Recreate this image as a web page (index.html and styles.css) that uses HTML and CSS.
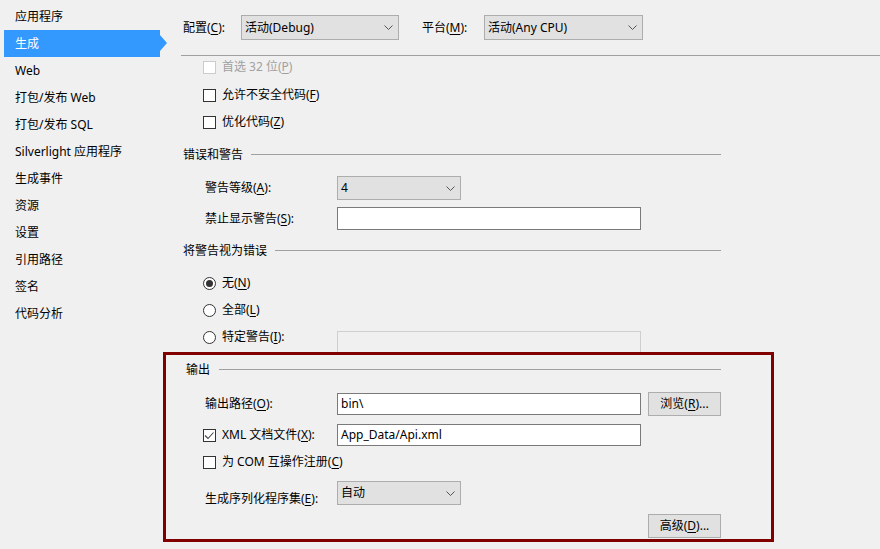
FILE: index.html
```html
<!DOCTYPE html>
<html lang="zh-CN">
<head>
<meta charset="utf-8">
<title>生成</title>
<link rel="stylesheet" href="styles.css">
</head>
<body>
<div class="app">
  <nav class="sidebar">
    <div class="nav-item">应用程序</div>
    <div class="nav-item active">生成</div>
    <div class="nav-item">Web</div>
    <div class="nav-item">打包/发布 Web</div>
    <div class="nav-item">打包/发布 SQL</div>
    <div class="nav-item">Silverlight 应用程序</div>
    <div class="nav-item">生成事件</div>
    <div class="nav-item">资源</div>
    <div class="nav-item">设置</div>
    <div class="nav-item">引用路径</div>
    <div class="nav-item">签名</div>
    <div class="nav-item">代码分析</div>
  </nav>

  <main class="main">
    <div class="topbar">
      <span class="top-label label-config">配置(<u>C</u>):</span>
      <div class="dropdown dropdown-config">
        <span class="dd-text">活动(Debug)</span>
        <svg class="chev" width="9" height="5" viewBox="0 0 9 5"><polyline points="0.5,0.5 4.5,4.5 8.5,0.5" fill="none" stroke="#555" stroke-width="1"/></svg>
      </div>
      <span class="top-label label-platform">平台(<u>M</u>):</span>
      <div class="dropdown dropdown-platform">
        <span class="dd-text">活动(Any CPU)</span>
        <svg class="chev" width="9" height="5" viewBox="0 0 9 5"><polyline points="0.5,0.5 4.5,4.5 8.5,0.5" fill="none" stroke="#555" stroke-width="1"/></svg>
      </div>
    </div>
    <div class="top-sep"></div>

    <div class="content">
      <div class="check-row row-prefer disabled">
        <span class="checkbox checkbox-disabled"></span>
        <span>首选 32 位(<u>P</u>)</span>
      </div>
      <div class="check-row row-unsafe">
        <span class="checkbox"></span>
        <span>允许不安全代码(<u>F</u>)</span>
      </div>
      <div class="check-row row-optimize">
        <span class="checkbox"></span>
        <span>优化代码(<u>Z</u>)</span>
      </div>

      <div class="section-head head-errors">错误和警告</div>

      <div class="field-row row-level">
        <span class="field-label">警告等级(<u>A</u>):</span>
        <div class="dropdown dropdown-small">
          <span class="dd-text">4</span>
          <svg class="chev" width="9" height="5" viewBox="0 0 9 5"><polyline points="0.5,0.5 4.5,4.5 8.5,0.5" fill="none" stroke="#555" stroke-width="1"/></svg>
        </div>
      </div>
      <div class="field-row row-suppress">
        <span class="field-label">禁止显示警告(<u>S</u>):</span>
        <div class="textbox textbox-wide"></div>
      </div>

      <div class="section-head head-treat">将警告视为错误</div>

      <div class="check-row row-none">
        <span class="radio radio-on"></span>
        <span>无(<u>N</u>)</span>
      </div>
      <div class="check-row row-all">
        <span class="radio"></span>
        <span>全部(<u>L</u>)</span>
      </div>
      <div class="check-row row-specific">
        <div class="radio-group">
          <span class="radio"></span>
          <span class="radio-text">特定警告(<u>I</u>):</span>
        </div>
        <div class="textbox textbox-disabled"></div>
      </div>
    </div>

    <section class="output">
      <div class="section-head head-output">输出</div>

      <div class="field-row out-path">
        <span class="field-label">输出路径(<u>O</u>):</span>
        <div class="textbox textbox-wide textbox-filled">bin\</div>
        <div class="button">浏览(<u>R</u>)...</div>
      </div>

      <div class="check-row out-xml">
        <span class="checkbox">
          <svg width="13" height="13" viewBox="0 0 13 13"><polyline points="2,6.5 5,9.5 10.5,3.5" fill="none" stroke="#444" stroke-width="1.1"/></svg>
        </span>
        <span class="xml-label">XML 文档文件(<u>X</u>):</span>
        <div class="textbox textbox-wide textbox-filled">App_Data/Api.xml</div>
      </div>

      <div class="check-row out-com">
        <span class="checkbox"></span>
        <span>为 COM 互操作注册(<u>C</u>)</span>
      </div>

      <div class="field-row out-serial">
        <span class="field-label serial-label">生成序列化程序集(<u>E</u>):</span>
        <div class="dropdown dropdown-small">
          <span class="dd-text">自动</span>
          <svg class="chev" width="9" height="5" viewBox="0 0 9 5"><polyline points="0.5,0.5 4.5,4.5 8.5,0.5" fill="none" stroke="#555" stroke-width="1"/></svg>
        </div>
      </div>

      <div class="advanced-row">
        <div class="button">高级(<u>D</u>)...</div>
      </div>
    </section>
  </main>
</div>
</body>
</html>
```

FILE: styles.css
```css
* { box-sizing: border-box; }

html, body {
  margin: 0;
  padding: 0;
}

body {
  background: #f0f0f0;
  color: #000;
  font-family: "Noto Sans", "Noto Sans CJK SC", sans-serif;
  font-size: 12px;
  line-height: 16px;
  width: 880px;
  height: 549px;
  overflow: hidden;
}

u { text-decoration: underline; text-underline-offset: 2px; }

.app {
  display: flex;
  height: 549px;
}

/* ---------- sidebar ---------- */
.sidebar {
  width: 160px;
  flex: none;
  padding-top: 3px;
}

.nav-item {
  height: 27px;
  line-height: 27px;
  padding-left: 15px;
  white-space: nowrap;
}

.nav-item.active {
  position: relative;
  margin-left: 4px;
  padding-left: 11px;
  background: #3399ff;
  color: #fff;
}

.nav-item.active::after {
  content: "";
  position: absolute;
  left: 100%;
  top: 5px;
  border-left: 7px solid #3399ff;
  border-top: 8px solid transparent;
  border-bottom: 8px solid transparent;
}

/* ---------- main ---------- */
.main {
  flex: 1;
  min-width: 0;
}

.topbar {
  height: 55px;
  display: flex;
  align-items: flex-start;
  padding-top: 15px;
  padding-left: 23px;
}

.top-label {
  height: 25px;
  line-height: 25px;
  white-space: nowrap;
}

.label-config { width: 58px; }
.label-platform { width: 62px; margin-left: 23px; }

.top-sep {
  margin-left: 21px;
  border-top: 1px solid #a0a0a0;
}

.dropdown {
  display: flex;
  align-items: center;
  justify-content: space-between;
  background: #e1e1e1;
  border: 1px solid #adadad;
  padding: 0 5px 0 3px;
  white-space: nowrap;
}

.dropdown-config { width: 158px; height: 25px; }
.dropdown-platform { width: 159px; height: 25px; }
.dropdown-small { width: 124px; height: 24px; }

.chev { flex: none; }

/* ---------- content ---------- */
.content {
  margin-left: 23px;
  width: 538px;
}

.check-row {
  display: flex;
  align-items: center;
  gap: 6px;
  height: 22px;
  padding-left: 20px;
  white-space: nowrap;
}

.disabled { color: #a0a0a0; }

.checkbox {
  width: 13px;
  height: 13px;
  flex: none;
  background: #fff;
  border: 1px solid #333;
  display: block;
  position: relative;
}

.checkbox svg {
  position: absolute;
  left: -1px;
  top: -1px;
}

.checkbox-disabled {
  border-color: #cccccc;
}

.radio {
  width: 13px;
  height: 13px;
  flex: none;
  border-radius: 50%;
  background: #fff;
  border: 1px solid #333;
  display: flex;
  align-items: center;
  justify-content: center;
}

.radio-on::after {
  content: "";
  width: 7px;
  height: 7px;
  border-radius: 50%;
  background: #333;
}

.row-unsafe { margin-top: 6px; }
.row-optimize { margin-top: 5px; }

.section-head {
  display: flex;
  align-items: center;
  height: 20px;
  white-space: nowrap;
}

.section-head::after {
  content: "";
  flex: 1;
  border-top: 1px solid #a0a0a0;
  margin-left: 8px;
  margin-top: -1px;
}

.head-errors { margin-top: 12px; }
.head-treat { margin-top: 11px; }

.field-row {
  display: flex;
  align-items: center;
  padding-left: 22px;
  white-space: nowrap;
}

.field-label {
  width: 132px;
  flex: none;
}

.row-level { margin-top: 11px; height: 24px; }
.row-suppress { margin-top: 7px; height: 23px; }

.textbox {
  background: #fff;
  border: 1px solid #7a7a7a;
  height: 23px;
}

.textbox-wide { width: 304px; }

.textbox-filled {
  height: 22px;
  line-height: 20px;
  padding-left: 3px;
}

.row-none { margin-top: 11px; }
.row-all { margin-top: 5px; }

.row-specific {
  margin-top: 5px;
  height: auto;
  align-items: flex-start;
  gap: 0;
}

.radio-group {
  display: flex;
  align-items: center;
  gap: 6px;
  height: 22px;
  width: 134px;
}

.textbox-disabled {
  width: 304px;
  height: 21px;
  margin-top: 5px;
  background: #f0f0f0;
  border: 1px solid #cfcfcf;
  border-bottom: none;
}

/* ---------- output (highlighted) ---------- */
.output {
  margin-left: 3px;
  width: 611px;
  height: 190px;
  border: 3px solid #800000;
  padding: 5px 0 0 20px;
}

.head-output {
  width: 535px;
}

.head-output::after { margin-left: 9px; }

.output .field-row { padding-left: 19px; }
.output .check-row { padding-left: 17px; }

.out-path {
  margin-top: 12px;
  height: 24px;
}

.button {
  width: 73px;
  height: 24px;
  line-height: 22px;
  text-align: center;
  background: #e1e1e1;
  border: 1px solid #adadad;
  white-space: nowrap;
}

.out-path .button { margin-left: 7px; }

.out-xml {
  margin-top: 7px;
  height: 24px;
}

.xml-label { width: 109px; flex: none; }

.out-com { margin-top: 4px; }

.out-serial {
  margin-top: 8px;
  height: 24px;
  align-items: flex-start;
}

.serial-label {
  line-height: 22px;
  margin-top: 7px;
}

.advanced-row {
  display: flex;
  justify-content: flex-end;
  width: 535px;
  margin-top: 9px;
}
```
